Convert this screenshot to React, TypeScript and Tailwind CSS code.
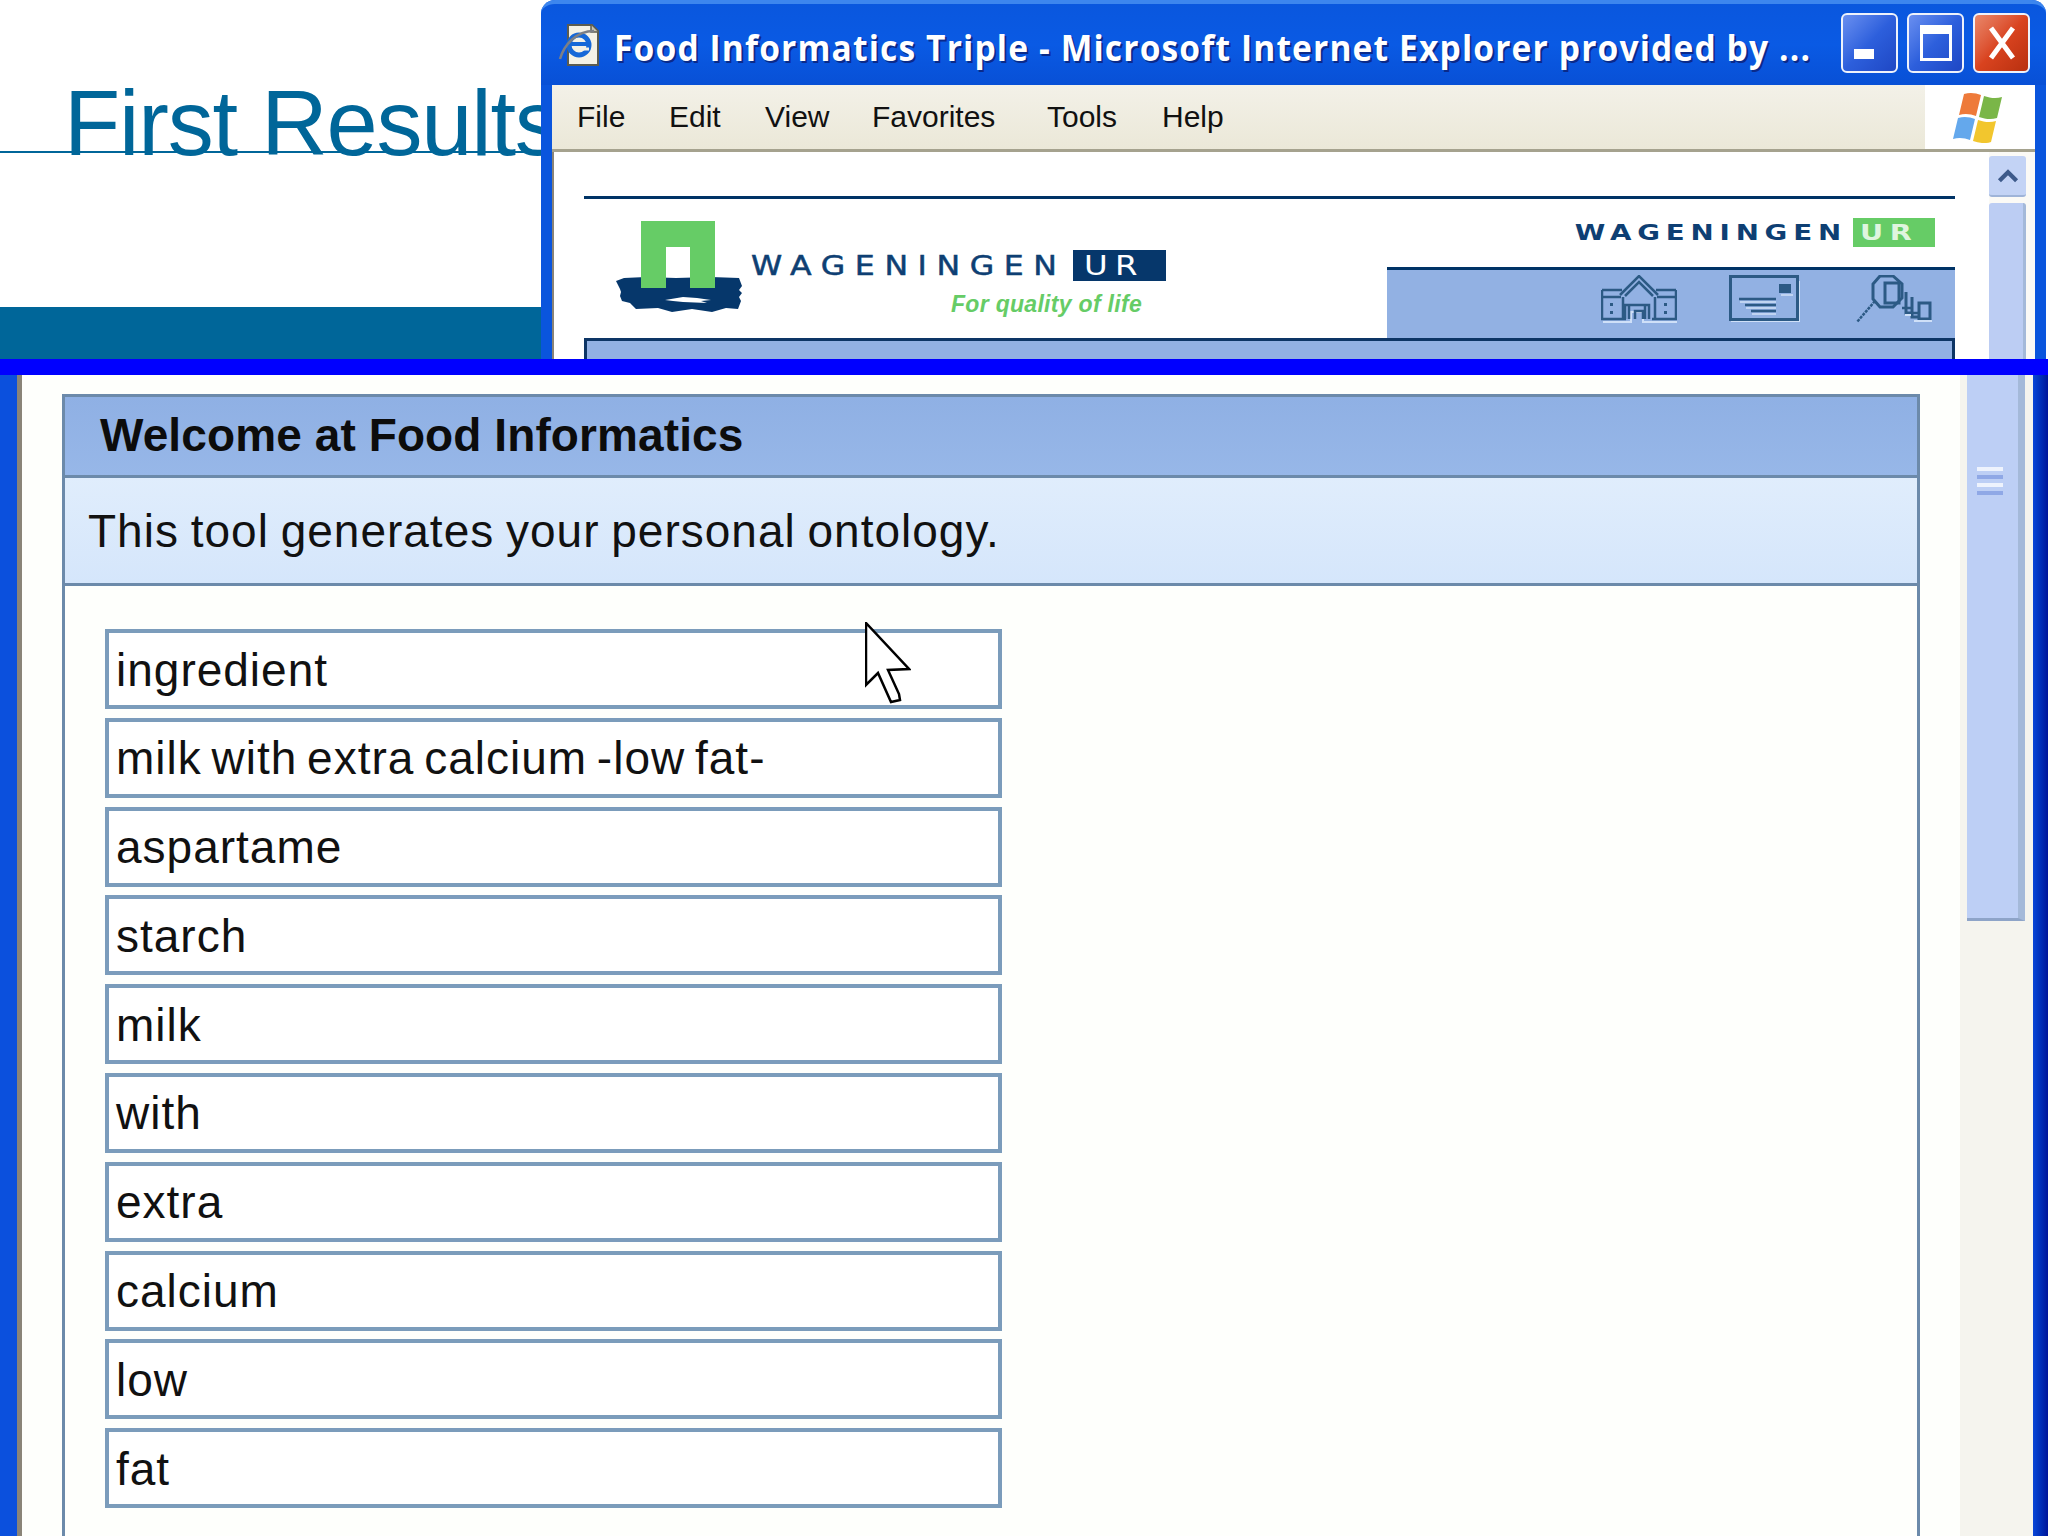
const terms = ["ingredient", "milk with extra calcium -low fat-", "aspartame", "starch", "milk", "with", "extra", "calcium", "low", "fat"];
const menus = [
  { label: "File", w: "w-[92px]" },
  { label: "Edit", w: "w-[96px]" },
  { label: "View", w: "w-[107px]" },
  { label: "Favorites", w: "w-[175px]" },
  { label: "Tools", w: "w-[115px]" },
  { label: "Help", w: "w-[70px]" },
];

function IeIcon() {
  return (
    <svg viewBox="0 0 44 44" className="w-[44px] h-[44px] shrink-0">
      <path d="M10 2h24l6 6v34H10z" fill="#f4f1e6" stroke="#5c5c50" strokeWidth="2" />
      <path d="M33 2v7h7" fill="#c9c6b6" stroke="#5c5c50" strokeWidth="1.5" />
      <circle cx="21" cy="22" r="10" fill="none" stroke="#1668d8" strokeWidth="5" />
      <path d="M12 21h18" stroke="#1668d8" strokeWidth="4" />
      <path d="M31 26h-9" stroke="#f4f1e6" strokeWidth="3" />
      <path d="M2 36C6 22 18 8 36 8" fill="none" stroke="#7c7f86" strokeWidth="2.5" />
    </svg>
  );
}

function WinButton({ kind }: { kind: "min" | "max" | "close" }) {
  const bg = kind === "close" ? "bg-gradient-to-br from-[#e8876a] via-[#d9431f] to-[#b8300f]" : "bg-gradient-to-br from-[#6a8ff0] via-[#2d5fdc] to-[#1f47c4]";
  return (
    <div className={`w-[57px] h-[60px] rounded-[6px] border-2 border-[#eef2fb] flex items-center justify-center relative ${bg}`}>
      {kind === "min" && <div className="absolute left-[11px] bottom-[12px] w-[20px] h-[10px] bg-white" />}
      {kind === "max" && (
        <div className="w-[32px] h-[36px] border-[3px] border-white border-t-[9px]" />
      )}
      {kind === "close" && (
        <svg viewBox="0 0 32 36" className="w-[32px] h-[36px]">
          <path d="M5 3l22 30M27 3L5 33" stroke="#fff" strokeWidth="5" />
        </svg>
      )}
    </div>
  );
}

function WinFlag() {
  return (
    <svg viewBox="0 0 56 52" className="w-[56px] h-[52px]">
      <path d="M12 3c6-2 12-1 17 1l-5 21c-5-2-11-3-17-1z" fill="#ee7a3a" />
      <path d="M32 5c6 2 12 3 18 1l-5 21c-6 2-12 1-18-1z" fill="#7ab648" />
      <path d="M6 27c6-2 12-1 17 1l-5 21c-5-2-11-3-17-1z" fill="#64a8ec" />
      <path d="M26 29c6 2 12 3 18 1l-5 21c-6 2-12 1-18-1z" fill="#f2c62e" />
    </svg>
  );
}

function WurMark() {
  return (
    <svg viewBox="0 0 130 93" className="w-[130px] h-[93px] shrink-0">
      <path d="M3 60l8-3 22-1 30 1 35-1 28 1 3 8-3 4 3 3-3 4 2 4-3 8-12-1-14 4-20-3-20 3-14-4-22 1-6-6-8-2-2-5 1-4-1-3z" fill="#06376b" />
      <path d="M52 79l18-3 14 1 14 2-10 1 6 2-24-1-10-1z" fill="#ffffff" />
      <path fill="#66cc66" d="M28 0h74v67H77V26H53v41H28z" />
    </svg>
  );
}

function HomeIcon() {
  const s = "#2c5a85";
  return (
    <svg viewBox="0 0 76 48" className="w-[76px] h-[48px]" fill="none">
      <g stroke="#cfe0f8" strokeWidth="2" transform="translate(2 3)">
        <path d="M0 44h28v-10h12v10h36" />
      </g>
      <g stroke={s} strokeWidth="2.5">
        <path d="M19 20L38 1l19 19" />
        <path d="M24 21L38 7l14 14" />
        <path d="M1 15h20M55 15h20M1 22h19M56 22h19M1 15v29h24M75 15v29H51" />
        <path d="M24 44V30h4v14M48 44V30h-4v14M28 30h16M34 44V36h8v8M22 22v22M54 22v22" />
      </g>
      <path d="M9 28h3v3H9zM9 36h3v3H9zM63 28h3v3h-3zM63 36h3v3h-3z" fill={s} />
    </svg>
  );
}

function MailIcon() {
  const s = "#2c5a85";
  return (
    <svg viewBox="0 0 72 48" className="w-[72px] h-[48px]" fill="none">
      <path d="M2 46h69M70 6v40" stroke="#cfe0f8" strokeWidth="2" />
      <rect x="1.5" y="1.5" width="67" height="43" stroke={s} strokeWidth="3" />
      <rect x="50" y="9" width="12" height="9" fill={s} />
      <path d="M10 24h37M16 30h31M22 36h25" stroke={s} strokeWidth="2.5" />
      <path d="M11 27h36M17 33h30M23 39h24M52 20h12" stroke="#cfe0f8" strokeWidth="1.5" />
    </svg>
  );
}

function SearchIcon() {
  const s = "#2c5a85";
  return (
    <svg viewBox="0 0 77 48" className="w-[77px] h-[48px]" fill="none">
      <path d="M19 26L1 47" stroke={s} strokeWidth="2.5" strokeDasharray="3 1" />
      <path d="M24 1h13l9 8v14l-9 9H24l-7-8V9z" stroke={s} strokeWidth="3" />
      <path d="M29 8h14v20H29z" stroke={s} strokeWidth="3" />
      <path d="M50 17v21h5M56 22v20h6M63 28h11v16H63z" stroke={s} strokeWidth="3" />
      <path d="M46 33h9M55 38h8" stroke={s} strokeWidth="2.5" />
      <path d="M58 46h18M49 40h6" stroke="#cfe0f8" strokeWidth="2" />
    </svg>
  );
}

function Cursor() {
  return (
    <svg viewBox="0 0 46 82" className="absolute left-[865px] top-[622px] w-[46px] h-[82px]">
      <path d="M1 1v62l12-12 13 29 9-2-1-6-11-24 21-1z" fill="#fff" stroke="#000" strokeWidth="2.5" strokeLinejoin="miter" />
    </svg>
  );
}

function TopScrollbar() {
  return (
    <div className="w-[46px] shrink-0 bg-[#fbfaf6] pr-[9px] pt-[4px] flex flex-col gap-[6px]">
      <div className="h-[41px] rounded-[3px] bg-[#c3d3f5] border-b-2 border-[#9fb4d8] flex items-center justify-center">
        <svg viewBox="0 0 20 14" className="w-[22px] h-[15px]">
          <path d="M2 12l8-8 8 8" fill="none" stroke="#3d5a8a" strokeWidth="4" />
        </svg>
      </div>
      <div className="flex-1 rounded-t-[3px] bg-[#bccdf3] border-r-[3px] border-[#a4b9d9]" />
    </div>
  );
}

export default function App() {
  return (
    <div className="w-[2048px] h-[1536px] overflow-hidden bg-white flex flex-col font-['Liberation_Sans',sans-serif]">
      <div className="h-[359px] flex shrink-0">
        <div className="w-[541px] shrink-0 flex flex-col">
          <div className="h-[153px] border-b-2 border-[#006699] pl-[64px] pt-[70px]">
            <div className="text-[92px] leading-[106px] tracking-[-1.2px] text-[#006699] whitespace-nowrap">First Results</div>
          </div>
          <div className="flex-1" />
          <div className="h-[52px] bg-[#006699]" />
        </div>

        <div className="w-[505px] flex-1 relative z-10 flex flex-col rounded-t-[14px] bg-[#0a55dd] mr-[2px] pl-[11px] pr-[11px]">
          <div className="h-[85px] -mx-[11px] rounded-t-[14px] pl-[17px] pr-[16px] flex items-center bg-gradient-to-b from-[#0a57de] via-[#0a5ae4] to-[#0850d6] border-t-[4px] border-[#3d86ee]">
            <IeIcon />
            <div className="ml-[12px] flex-1 min-w-0 pt-[6px] whitespace-nowrap text-white font-bold text-[36px] leading-none [text-shadow:2px_2px_0_#0a2a8a] tracking-[1.2px] font-['Open_Sans',sans-serif] scale-x-[0.933] origin-left">
              Food Informatics Triple - Microsoft Internet Explorer provided by ...
            </div>
            <div className="flex gap-[9px] -mt-[4px] shrink-0">
              <WinButton kind="min" />
              <WinButton kind="max" />
              <WinButton kind="close" />
            </div>
          </div>

          <div className="h-[67px] flex bg-[#ece9d8] border-b-[3px] border-[#a5a28e]">
            <div className="flex-1 flex items-center pl-[25px] pb-[2px] text-[30px] text-[#111] bg-gradient-to-b from-[#f3f1e8] to-[#ebe8d8]">
              {menus.map((m) => (
                <span key={m.label} className={m.w}>{m.label}</span>
              ))}
            </div>
            <div className="w-[110px] bg-white flex items-center justify-center">
              <WinFlag />
            </div>
          </div>

          <div className="flex-1 flex min-h-0 bg-white border-l-[2px] border-[#8a8478]">
            <div className="flex-1 pl-[30px] pr-[34px] pt-[44px] flex flex-col">
              <div className="h-[3px] bg-[#003366]" />
              <div className="h-[139px] flex">
                <div className="flex-1 pl-[29px] pt-[22px] flex">
                  <WurMark />
                  <div className="ml-[8px] pt-[29px]">
                    <div className="flex items-center h-[31px]">
                      <span className="w-[322px] font-['DejaVu_Sans',sans-serif] text-[27px] leading-none tracking-[8.2px] text-[#0e3f73] [-webkit-text-stroke:0.5px_#0e3f73] whitespace-nowrap scale-x-[1.17] origin-left">WAGENINGEN</span>
                      <span className="w-[93px] h-[31px] pl-[11px] bg-[#06376b] font-['DejaVu_Sans',sans-serif] text-white text-[27px] leading-[31px] tracking-[6px]">
                        <span className="inline-block scale-x-[1.2] origin-left">UR</span>
                      </span>
                    </div>
                    <div className="mt-[10px] ml-[200px] text-[#66cc66] italic font-bold text-[23px] leading-[26px] tracking-[0.3px] whitespace-nowrap">For quality of life</div>
                  </div>
                </div>
                <div className="w-[568px] flex flex-col">
                  <div className="h-[68px] pt-[19px] pr-[20px] flex justify-end">
                    <div className="flex items-center h-[29px]">
                      <span className="font-['DejaVu_Sans',sans-serif] text-[22px] font-bold leading-none tracking-[4.6px] text-[#0e3f73] whitespace-nowrap scale-x-[1.26] origin-right">WAGENINGEN</span>
                      <span className="ml-[6px] w-[82px] h-[29px] pl-[7px] bg-[#66cc66] text-[#dff5df] font-['DejaVu_Sans',sans-serif] font-bold text-[22px] leading-[29px] tracking-[5px]">
                        <span className="inline-block scale-x-[1.3] origin-left">UR</span>
                      </span>
                    </div>
                  </div>
                  <div className="flex-1 border-t-[3px] border-[#003366] bg-[#92b1e3] pt-[5px] pr-[22px] flex justify-end gap-[52px]">
                    <HomeIcon />
                    <MailIcon />
                    <div className="ml-[3px]">
                      <SearchIcon />
                    </div>
                  </div>
                </div>
              </div>
              <div className="flex-1 border-[3px] border-b-0 border-[#0d3565] bg-[#92b1e3]" />
            </div>
            <TopScrollbar />
          </div>
        </div>
      </div>

      <div className="h-[16px] shrink-0 bg-[#0000ff]" />

      <div className="flex-1 min-h-0 flex overflow-hidden">
        <div className="w-[17px] shrink-0 bg-[#0b50dd]" />
        <div className="w-[5px] shrink-0 bg-[#8a8478]" />
        <div className="flex-1 bg-[#fefffc] pl-[40px] pr-[40px] pt-[19px]">
          <div className="h-[1200px] border-[3px] border-[#6c8aaa] bg-[#fefffc]">
            <div className="h-[81px] px-[35px] pb-[2px] bg-gradient-to-b from-[#8fb0e4] to-[#97b7e8] border-b-[3px] border-[#6c8aaa] flex items-center">
              <span className="text-[46px] font-bold text-[#0c0c0c] tracking-[0.1px] whitespace-nowrap">Welcome at Food Informatics</span>
            </div>
            <div className="h-[108px] pl-[23px] pt-[2px] bg-gradient-to-b from-[#e0edfc] to-[#d5e6fb] border-b-[3px] border-[#6c8aaa] flex items-center">
              <span className="text-[46px] text-[#111] tracking-[1px] [word-spacing:-2px] whitespace-nowrap">This tool generates your personal ontology.</span>
            </div>
            <div className="pt-[43px] pl-[40px] flex flex-col gap-[8.8px]">
              {terms.map((t) => (
                <div key={t} className="w-[897px] h-[80px] border-[4px] border-[#7b9cbb] bg-white pl-[7px] pt-[2px] flex items-center text-[46px] text-[#111] tracking-[1px] [word-spacing:-4px]">
                  {t}
                </div>
              ))}
            </div>
          </div>
        </div>
        <div className="w-[73px] shrink-0 bg-[#f5f4ee] pl-[7px] pr-[8px]">
          <div className="h-[546px] bg-[#bdcff5] border-r-[7px] border-[#a4b9d9] border-b-[3px] border-b-[#8ea4c8] flex justify-center pt-[92px] pr-[6px]">
            <div className="w-[26px] h-[30px] flex flex-col gap-[4px]">
              <div className="h-[4px] bg-[#eef3fd]" />
              <div className="h-[4px] bg-[#8fa8e6]" />
              <div className="h-[4px] bg-[#eef3fd]" />
              <div className="h-[4px] bg-[#8fa8e6]" />
            </div>
          </div>
        </div>
        <div className="w-[15px] shrink-0 bg-gradient-to-r from-[#0a46d8] to-[#00149a]" />
      </div>
      <Cursor />
    </div>
  );
}
